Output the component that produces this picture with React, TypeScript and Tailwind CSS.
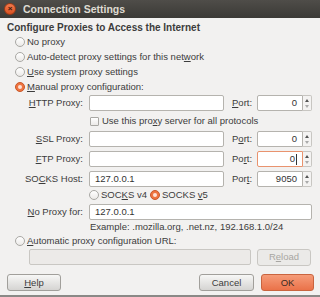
import React from "react";

const F = { fontFamily: '"Liberation Sans", Arial, sans-serif' };

function U({ children }: { children: React.ReactNode }) {
  return <span className="underline underline-offset-[1px] decoration-[1px]">{children}</span>;
}

function Radio({ checked = false }: { checked?: boolean }) {
  if (checked) {
    return (
      <span className="w-[10px] h-[10px] rounded-full bg-[#ef7440] border border-[#c8582a] flex items-center justify-center shrink-0">
        <span className="w-[4px] h-[4px] rounded-full bg-[#fde2d6]" />
      </span>
    );
  }
  return (
    <span className="w-[10px] h-[10px] rounded-full border border-[#a9a8a4] bg-gradient-to-b from-white to-[#eceae8] shrink-0" />
  );
}

function Input({ w, value = "", disabled = false }: { w: string; value?: string; disabled?: boolean }) {
  return (
    <div
      className={
        w +
        " h-[16px] rounded-[2px] border flex items-center px-[5px] text-[#333] " +
        (disabled ? "bg-[#eceae8] border-[#c9c7c3]" : "bg-white border-[#b5b3ae]")
      }
    >
      {value}
    </div>
  );
}

function Spin({ value, focused = false }: { value: string; focused?: boolean }) {
  return (
    <div className="w-[55px] h-[16px] flex">
      <div
        className={
          "w-[46px] h-full bg-white rounded-l-[2px] border flex items-center justify-end pr-[5px] text-[#333] " +
          (focused ? "border-[#e9936e]" : "border-[#b5b3ae]")
        }
      >
        {value}
        {focused && <span className="w-px h-[11px] bg-[#333] ml-px" />}
      </div>
      <div className="w-[9px] h-full bg-[#f4f3f2] border border-l-0 border-[#c8c6c2] rounded-r-[2px] flex flex-col items-center justify-center gap-[3px]">
        <span className="w-0 h-0 border-l-[2px] border-r-[2px] border-b-[3px] border-l-transparent border-r-transparent border-b-[#555]" />
        <span className="w-0 h-0 border-l-[2px] border-r-[2px] border-t-[3px] border-l-transparent border-r-transparent border-t-[#aaa]" />
      </div>
    </div>
  );
}

function ProxyRow({
  label,
  port,
  value = "",
  portValue,
  focused = false,
  mt,
}: {
  label: React.ReactNode;
  port: React.ReactNode;
  value?: string;
  portValue: string;
  focused?: boolean;
  mt: string;
}) {
  return (
    <div className={"flex items-center h-[16px] " + mt}>
      <div className="w-[76px] text-right">{label}</div>
      <div className="ml-[6px]">
        <Input w="w-[135px]" value={value} />
      </div>
      <div className="ml-[8px] w-[25px]">{port}</div>
      <Spin value={portValue} focused={focused} />
    </div>
  );
}

function Button({ children, w, ok = false, disabled = false }: { children: React.ReactNode; w: string; ok?: boolean; disabled?: boolean }) {
  let cls = "";
  if (ok) cls = "bg-gradient-to-b from-[#f59b78] to-[#ea7249] border-[#c9643f] text-[#3a2a22]";
  else if (disabled) cls = "bg-[#ebeae8] border-[#c9c7c3] text-[#a8a6a2]";
  else cls = "bg-gradient-to-b from-[#f7f7f6] to-[#d5d4d2] border-[#a19f9b] text-[#3c3c3c]";
  return (
    <div className={w + " h-[17px] rounded-[3px] border flex items-center justify-center " + cls}>{children}</div>
  );
}

export default function App() {
  return (
    <div className="w-[320px] h-[297px] bg-[#f2f1f0] text-[#3c3c3c] text-[9.5px] leading-none flex flex-col overflow-hidden" style={F}>
      {/* Title bar */}
      <div className="h-[18px] bg-gradient-to-b from-[#4f4d49] to-[#3b3a36] flex items-center shrink-0">
        <div className="ml-[4px] w-[12px] h-[12px] rounded-full bg-gradient-to-b from-[#f37a4c] to-[#d8501f] border border-[#9c3a16] flex items-center justify-center">
          <span className="text-[#3a1a0c] text-[8px] font-bold leading-none mt-[-1px]">×</span>
        </div>
        <div className="ml-[7px] text-[#dfdbd2] font-bold text-[10.5px]">Connection Settings</div>
      </div>

      {/* Body */}
      <div className="flex flex-col pl-[7px] pr-[6px]">
        <div className="mt-[3px] h-[13px] flex items-center font-bold text-[10px]">Configure Proxies to Access the Internet</div>

        <div className="h-[15px] flex items-center pl-[8px] gap-[2px]">
          <Radio />
          <span>No proxy</span>
        </div>
        <div className="h-[15px] flex items-center pl-[8px] gap-[2px]">
          <Radio />
          <span>
            Auto-detect proxy settings for this net<U>w</U>ork
          </span>
        </div>
        <div className="h-[15px] flex items-center pl-[8px] gap-[2px]">
          <Radio />
          <span>
            <U>U</U>se system proxy settings
          </span>
        </div>
        <div className="h-[15px] flex items-center pl-[8px] gap-[2px]">
          <Radio checked />
          <span>
            <U>M</U>anual proxy configuration:
          </span>
        </div>

        <ProxyRow
          mt="mt-[1px]"
          label={
            <>
              <U>H</U>TTP Proxy:
            </>
          }
          port={
            <>
              <U>P</U>ort:
            </>
          }
          portValue="0"
        />

        <div className="h-[20px] flex items-center pl-[83px] gap-[3px]">
          <span className="w-[9px] h-[9px] rounded-[1px] border border-[#a9a8a4] bg-gradient-to-b from-white to-[#eceae8]" />
          <span>
            Use this pro<U>x</U>y server for all protocols
          </span>
        </div>

        <ProxyRow
          mt=""
          label={
            <>
              <U>S</U>SL Proxy:
            </>
          }
          port={
            <>
              P<U>o</U>rt:
            </>
          }
          portValue="0"
        />
        <ProxyRow
          mt="mt-[4px]"
          label={
            <>
              <U>F</U>TP Proxy:
            </>
          }
          port={
            <>
              Po<U>r</U>t:
            </>
          }
          portValue="0"
          focused
        />
        <ProxyRow
          mt="mt-[4px]"
          label={
            <>
              SO<U>C</U>KS Host:
            </>
          }
          port={
            <>
              Por<U>t</U>:
            </>
          }
          value="127.0.0.1"
          portValue="9050"
        />

        <div className="h-[16px] flex items-center pl-[82px]">
          <Radio />
          <span className="ml-[2px]">
            SOC<U>K</U>S v4
          </span>
          <span className="ml-[3px]">
            <Radio checked />
          </span>
          <span className="ml-[2px]">
            SOCKS <U>v</U>5
          </span>
        </div>

        <div className="flex items-center h-[16px] mt-[1px]">
          <div className="w-[76px] text-right">
            <U>N</U>o Proxy for:
          </div>
          <div className="ml-[6px]">
            <Input w="w-[223px]" value="127.0.0.1" />
          </div>
        </div>

        <div className="h-[14px] flex items-center pl-[83px]">Example: .mozilla.org, .net.nz, 192.168.1.0/24</div>

        <div className="h-[14px] flex items-center pl-[8px] gap-[2px]">
          <Radio />
          <span>
            <U>A</U>utomatic proxy configuration URL:
          </span>
        </div>

        <div className="flex items-center h-[16px] mt-[1px]">
          <div className="ml-[22px]">
            <Input w="w-[222px]" disabled />
          </div>
          <div className="ml-[6px]">
            <Button w="w-[54px]" disabled>
              R<U>e</U>load
            </Button>
          </div>
        </div>

        <div className="flex items-center mt-[9px]">
          <Button w="w-[54px]">
            <U>H</U>elp
          </Button>
          <div className="flex-1" />
          <Button w="w-[55px]">Cancel</Button>
          <div className="ml-[7px]">
            <Button w="w-[53px]" ok>
              OK
            </Button>
          </div>
        </div>
      </div>
      <div className="flex-1" />
      <div className="h-[2px] bg-[#8a8986] shrink-0" />
    </div>
  );
}
